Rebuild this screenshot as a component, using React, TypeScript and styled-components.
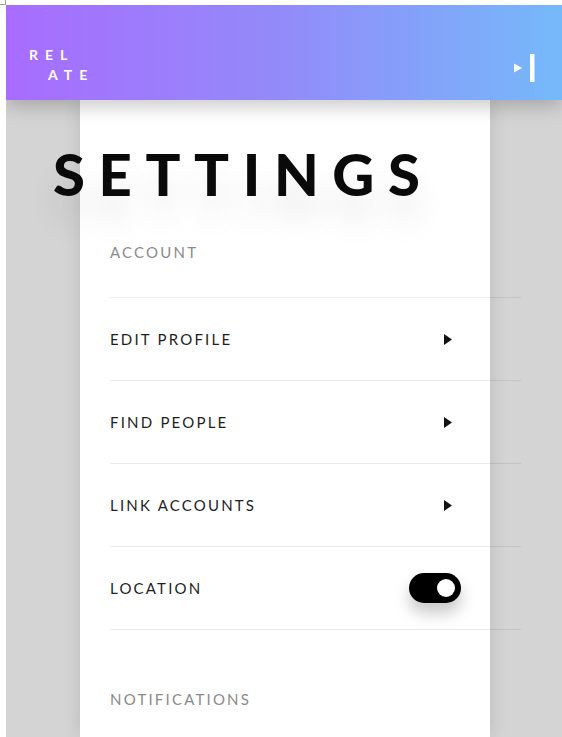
import React from "react";
import styled, { createGlobalStyle } from "styled-components";

const Global = createGlobalStyle`
  html, body { margin: 0; padding: 0; background: #ffffff; }
  body { font-family: "Lato", "Liberation Sans", sans-serif; overflow: hidden; }
  * { box-sizing: border-box; }
`;

const Corner = styled.div`
  position: absolute;
  left: 0;
  top: 0;
  width: 6px;
  height: 5px;
  border-right: 1px solid #a0a0a0;
  border-bottom: 1px solid #a0a0a0;
`;

const Page = styled.div`
  margin: 5px 0 0 6px;
  height: 732px;
  display: flex;
  flex-direction: column;
  background: #d4d4d4;
  overflow: hidden;
`;

const Header = styled.header`
  position: relative;
  z-index: 2;
  flex: 0 0 95px;
  display: flex;
  align-items: flex-end;
  justify-content: space-between;
  padding: 0 27px 18px 23px;
  background: linear-gradient(90deg, #a86cfe 0%, #928bf9 50%, #75b9fa 100%);
  box-shadow: 0 6px 18px rgba(0, 0, 0, 0.22);
`;

const Logo = styled.div`
  display: flex;
  flex-direction: column;
  gap: 6px;
  color: #ffffff;
  font-weight: 700;
  font-size: 14px;
  line-height: 14px;
  letter-spacing: 7px;
`;

const LogoLine = styled.span<{ $indent?: number }>`
  padding-left: ${(p) => p.$indent ?? 0}px;
`;

const Main = styled.main`
  flex: 1;
  display: flex;
  padding-left: 74px;
  min-height: 0;
`;

const Card = styled.section`
  width: 410px;
  background: #ffffff;
  padding: 45px 0 0 30px;
  box-shadow: 0 0 18px rgba(0, 0, 0, 0.12);
`;

const Title = styled.h1`
  margin: 0 0 0 -57px;
  font-family: "Lato", "Liberation Sans", sans-serif;
  font-weight: 900;
  font-size: 58px;
  line-height: 58px;
  letter-spacing: 13.6px;
  color: #0a0a0a;
  text-shadow: 0 26px 30px rgba(0, 0, 0, 0.1);
  white-space: nowrap;
`;

const SectionLabel = styled.div<{ $top: number }>`
  margin-top: ${(p) => p.$top}px;
  font-size: 15px;
  line-height: 15px;
  letter-spacing: 2.2px;
  color: #8b8b8b;
`;

const List = styled.ul`
  list-style: none;
  margin: 37px 0 0 0;
  padding: 0;
  width: 411px;
  border-top: 1px solid rgba(0, 0, 0, 0.08);
`;

const Row = styled.li`
  height: 83px;
  display: flex;
  align-items: center;
  justify-content: space-between;
  padding-right: 60px;
  border-bottom: 1px solid rgba(0, 0, 0, 0.08);
`;

const RowLabel = styled.span`
  font-size: 15px;
  line-height: 15px;
  letter-spacing: 2.2px;
  color: #1e1e1e;
`;

const Arrow = styled.svg`
  margin-right: 9px;
`;

const Toggle = styled.div`
  width: 52px;
  height: 30px;
  border-radius: 15px;
  background: #000000;
  display: flex;
  align-items: center;
  justify-content: flex-end;
  padding-right: 6px;
  box-shadow: 0 10px 16px rgba(0, 0, 0, 0.22);
`;

const Knob = styled.div`
  width: 18px;
  height: 18px;
  border-radius: 50%;
  background: #ffffff;
`;

const ArrowIcon = () => (
  <Arrow width="8" height="11" viewBox="0 0 8 11">
    <polygon points="0,0 8,5.5 0,11" fill="#111" />
  </Arrow>
);

const rows = ["EDIT PROFILE", "FIND PEOPLE", "LINK ACCOUNTS"];

export default function App() {
  return (
    <>
      <Global />
      <Corner />
      <Page>
        <Header>
          <Logo>
            <LogoLine>REL</LogoLine>
            <LogoLine $indent={19}>ATE</LogoLine>
          </Logo>
          <svg width="21" height="28" viewBox="0 0 21 28">
            <polygon points="0,9.5 8,14 0,18.5" fill="#ffffff" />
            <rect x="16" y="0" width="4.5" height="28" fill="#ffffff" />
          </svg>
        </Header>
        <Main>
          <Card>
            <Title>SETTINGS</Title>
            <SectionLabel $top={42}>ACCOUNT</SectionLabel>
            <List>
              {rows.map((r) => (
                <Row key={r}>
                  <RowLabel>{r}</RowLabel>
                  <ArrowIcon />
                </Row>
              ))}
              <Row>
                <RowLabel>LOCATION</RowLabel>
                <Toggle>
                  <Knob />
                </Toggle>
              </Row>
            </List>
            <SectionLabel $top={62}>NOTIFICATIONS</SectionLabel>
          </Card>
        </Main>
      </Page>
    </>
  );
}
